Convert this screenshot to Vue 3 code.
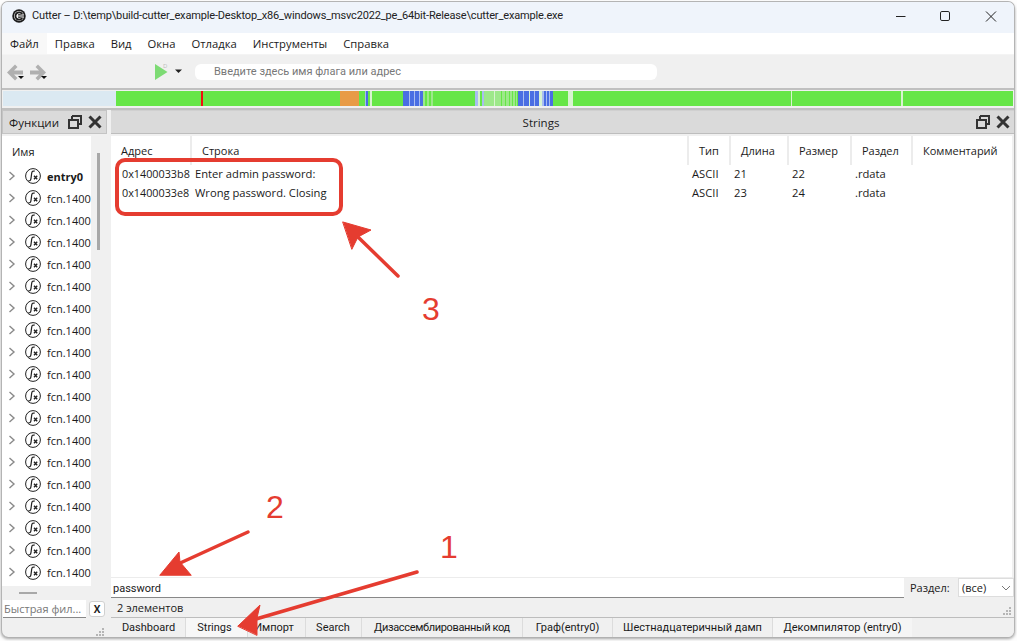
<script setup>
const functions = ['entry0', ...Array(18).fill('fcn.1400')]
const columns = [
  { label: 'Адрес', cls: 'c-addr' },
  { label: 'Строка', cls: 'c-str' },
  { label: 'Тип', cls: 'c-type' },
  { label: 'Длина', cls: 'c-len' },
  { label: 'Размер', cls: 'c-size' },
  { label: 'Раздел', cls: 'c-sec' },
  { label: 'Комментарий', cls: 'c-com' },
]
const rows = [
  ['0x1400033b8', 'Enter admin password:', 'ASCII', '21', '22', '.rdata'],
  ['0x1400033e8', 'Wrong password. Closing', 'ASCII', '23', '24', '.rdata'],
]
const tabs = [
  { label: 'Dashboard', w: 73, pad: 1 },
  { label: 'Strings', w: 62, pad: 4, active: true },
  { label: 'Импорт', w: 58, pad: 5 },
  { label: 'Search', w: 56, pad: 1 },
  { label: 'Дизассемблированный код', w: 161, pad: 0, tight: true },
  { label: 'Граф(entry0)', w: 90, pad: 0 },
  { label: 'Шестнадцатеричный дамп', w: 160, pad: 0 },
  { label: 'Декомпилятор (entry0)', w: 139, pad: 0 },
]
const G = '#66e647', B = '#4a6ee3', L = '#a9bdf0', W = '#d8f3d0', P = '#9de88a', O = '#e89b46', R = '#f01010'
const segments = [
  [G, 85], [R, 2], [G, 137], [O, 19], [G, 6], [L, 1], [B, 2], [G, 2], [W, 2], [G, 31],
  [B, 6], [L, 1], [B, 4], [L, 1], [B, 4], [L, 1], [B, 3],
  [P, 2], [G, 2], [P, 2], [G, 2], [P, 2], [G, 42],
  [L, 3], [W, 2], [G, 2], [L, 2],
  [P, 10], [W, 1], [P, 6], [G, 1], [P, 3], [G, 1], [P, 3], [G, 1], [P, 2], [G, 1], [P, 2], [G, 1], [P, 1], [G, 1],
  [B, 5], [L, 1], [B, 5], [W, 1], [B, 4], [L, 1], [B, 4], [W, 3], [L, 2], [B, 2], [L, 1], [B, 2], [L, 1], [B, 3],
  [G, 15], [W, 5], [G, 218], [W, 1], [G, 109], [W, 2], [G, 110],
]
</script>

<template>
  <div class="page">
    <div class="window">
      <header class="titlebar">
        <svg class="logo" width="16" height="16" viewBox="0 0 18 18">
          <circle cx="9" cy="9" r="7.6" fill="#1c1c1c" />
          <circle cx="9" cy="9" r="5.6" fill="#f4f4f4" />
          <path d="M12.5 6.4A4.2 4.2 0 1 0 12.5 11.6" fill="none" stroke="#1c1c1c" stroke-width="2" />
          <path d="M8 9h7M8 7.5l6-1M8 10.5l6 1" stroke="#1c1c1c" stroke-width="1" fill="none" />
        </svg>
        <span class="title">Cutter – D:\temp\build-cutter_example-Desktop_x86_windows_msvc2022_pe_64bit-Release\cutter_example.exe</span>
        <div class="winctl">
          <svg width="46" height="30" viewBox="0 0 46 30"><path d="M20 14.5h9.5" stroke="#222" /></svg>
          <svg width="46" height="30" viewBox="0 0 46 30"><rect x="18.5" y="9.5" width="9" height="9" rx="1.4" fill="none" stroke="#222" /></svg>
          <svg width="46" height="30" viewBox="0 0 46 30"><path d="M18 9.5l10 10M28 9.5l-10 10" stroke="#222" /></svg>
        </div>
      </header>

      <nav class="menubar">
        <span class="menu active">Файл</span>
        <span class="menu">Правка</span>
        <span class="menu">Вид</span>
        <span class="menu">Окна</span>
        <span class="menu">Отладка</span>
        <span class="menu">Инструменты</span>
        <span class="menu">Справка</span>
      </nav>

      <div class="toolbar">
        <svg class="nav-ico" width="24" height="24" viewBox="0 0 24 24">
          <path d="M0 12.5L8 4.5L10.5 7L7 10.5H16V14.5H7L10.5 18L8 20.5Z" fill="#b0b0b0" />
          <path d="M11 16h6l-3 3z" fill="#111" />
        </svg>
        <svg class="nav-ico" width="24" height="24" viewBox="0 0 24 24">
          <path d="M16 12.5L8 4.5L5.5 7L9 10.5H0V14.5H9L5.5 18L8 20.5Z" fill="#b0b0b0" />
          <path d="M11 16h6l-3 3z" fill="#111" />
        </svg>
        <div class="play">
          <svg width="34" height="20" viewBox="0 0 34 20">
            <path d="M0 2l12.5 8L0 18z" fill="#7ddb74" />
            <text x="8" y="6" class="play-d">D</text>
            <path d="M20 7.5h7l-3.5 3.5z" fill="#222" />
          </svg>
        </div>
        <div class="omnibar">Введите здесь имя флага или адрес</div>
      </div>

      <div class="overview">
        <div class="ov-blank"></div>
        <div class="ov-bar">
          <i v-for="(s, i) in segments" :key="i" :style="{ background: s[0], width: s[1] + 'px' }"></i>
        </div>
      </div>

      <div class="workspace">
        <aside class="left">
          <div class="dock-head left-head">
            <span>Функции</span>
            <svg class="dock-ico" width="16" height="16" viewBox="0 0 16 16">
              <path d="M5 2h9v8h-2.5M5 2v3" fill="none" stroke="#333" stroke-width="2" />
              <rect x="2" y="6" width="9" height="8" fill="none" stroke="#333" stroke-width="2" />
            </svg>
            <svg class="dock-ico" width="16" height="16" viewBox="0 0 16 16">
              <path d="M2.5 2.5l11 11M13.5 2.5l-11 11" stroke="#333" stroke-width="3" />
            </svg>
          </div>
          <div class="left-body">
            <div class="fn-list">
              <div class="fn-head">Имя</div>
              <div v-for="(f, i) in functions" :key="i" class="fn-row" :class="{ bold: i === 0 }">
                <svg class="chev" width="8" height="10" viewBox="0 0 8 10"><path d="M1.5 1l4.5 4-4.5 4" fill="none" stroke="#8a8a8a" stroke-width="1.4" /></svg>
                <svg class="fn-ico" width="16" height="16" viewBox="0 0 16 16">
                  <circle cx="8" cy="8" r="7.4" fill="#fff" stroke="#222" />
                  <path d="M3.4 12.6c1.8.5 2.300-.4 2.600-2.300l.7-5.200c.3-1.800 1.300-2.400 3-1.900" fill="none" stroke="#222" stroke-width="1.200" />
                  <path d="M9 7.800l3.200 3.400M12.200 7.800L9 11.200" stroke="#222" stroke-width="1.400" />
                </svg>
                <span class="fn-name">{{ f }}</span>
              </div>
            </div>
            <div class="v-scroll"><i></i></div>
          </div>
          <div class="h-scroll"><i></i></div>
          <div class="quick">
            <div class="quick-input">Быстрая фил...</div>
            <div class="quick-x">X</div>
          </div>
          <div class="grip-row">
            <svg width="10" height="9" viewBox="0 0 10 9" fill="#b5b5b5"><rect x="7" y="0" width="2" height="2"/><rect x="4" y="3" width="2" height="2"/><rect x="7" y="3" width="2" height="2"/><rect x="1" y="6" width="2" height="2"/><rect x="4" y="6" width="2" height="2"/><rect x="7" y="6" width="2" height="2"/></svg>
          </div>
        </aside>

        <main class="right">
          <div class="dock-head main-head">
            <span class="main-title">Strings</span>
            <svg class="dock-ico" width="16" height="16" viewBox="0 0 16 16">
              <path d="M5 2h9v8h-2.5M5 2v3" fill="none" stroke="#333" stroke-width="2" />
              <rect x="2" y="6" width="9" height="8" fill="none" stroke="#333" stroke-width="2" />
            </svg>
            <svg class="dock-ico" width="16" height="16" viewBox="0 0 16 16">
              <path d="M2.5 2.5l11 11M13.5 2.5l-11 11" stroke="#333" stroke-width="3" />
            </svg>
          </div>
          <div class="table">
            <div class="thead grid">
              <div v-for="c in columns" :key="c.label" class="th" :class="c.cls">{{ c.label }}</div>
            </div>
            <div v-for="r in rows" :key="r[0]" class="tr grid">
              <div v-for="(v, j) in r" :key="j" class="td" :class="{ first: j === 0 }">{{ v }}</div>
            </div>
          </div>
          <div class="filter">
            <div class="filter-input">password</div>
            <label class="filter-label">Раздел:</label>
            <div class="combo">
              <span>(все)</span>
              <svg width="10" height="6" viewBox="0 0 10 6"><path d="M1 1l4 4 4-4" fill="none" stroke="#777" /></svg>
            </div>
          </div>
          <div class="status">
            <span>2 элементов</span>
            <svg width="10" height="9" viewBox="0 0 10 9" fill="#b5b5b5"><rect x="7" y="0" width="2" height="2"/><rect x="4" y="3" width="2" height="2"/><rect x="7" y="3" width="2" height="2"/><rect x="1" y="6" width="2" height="2"/><rect x="4" y="6" width="2" height="2"/><rect x="7" y="6" width="2" height="2"/></svg>
          </div>
          <div class="tabs">
            <div
              v-for="t in tabs"
              :key="t.label"
              class="tab"
              :class="{ active: t.active, tight: t.tight }"
              :style="{ width: t.w + 'px', paddingRight: t.pad + 'px' }"
            >{{ t.label }}</div>
          </div>
        </main>
      </div>
    </div>

    <div class="redbox"></div>
    <svg class="notes" width="1017" height="641" viewBox="0 0 1017 641">
      <g fill="#e53c30" stroke="#e53c30" stroke-linecap="round">
        <path d="M398 276L358 237" stroke-width="3.5" fill="none" />
        <path d="M343 222l28 8-13 7-6 12z" stroke-width="1" />
        <path d="M248 532L178 564" stroke-width="3.5" fill="none" />
        <path d="M160 575l19-23 1 10 11 13z" stroke-width="1" />
        <path d="M417 572L256 619" stroke-width="3.5" fill="none" />
        <path d="M238 626l22-21-3 13 0 17z" stroke-width="1" />
      </g>
    </svg>
    <span class="num n1">1</span>
    <span class="num n2">2</span>
    <span class="num n3">3</span>
  </div>
</template>

<style>
html, body { margin: 0; background: #fff; overflow: hidden; }
</style>

<style scoped>
.page {
  position: relative;
  width: 1017px;
  height: 641px;
  overflow: hidden;
  background: #fdfdfd;
  font-family: "Open Sans", "Noto Sans", sans-serif;
  font-size: 11px;
  color: #1a1a1a;
}
.window {
  width: 1014px;
  height: 636px;
  margin-left: 1px;
  margin-top: 1px;
  border-radius: 7px;
  border: 1px solid #b4b4b4;
  border-width: 1px 1px 0 1px;
  box-shadow: 0 2px 3px rgba(0, 0, 0, .35);
  background: #f0f0f0;
  display: flex;
  flex-direction: column;
  overflow: hidden;
  box-sizing: border-box;
}
.titlebar {
  height: 31px;
  flex: none;
  background: #eff4fb;
  display: flex;
  align-items: flex-start;
  padding-left: 9px;
  box-sizing: border-box;
}
.logo { margin: 6px 5px 0 0; }
.title {
  font-family: Roboto, sans-serif;
  font-size: 11px;
  letter-spacing: -.16px;
  line-height: 28px;
  flex: 1;
  white-space: nowrap;
  color: #222;
}
.winctl { display: flex; width: 138px; }
.menubar {
  height: 21px;
  flex: none;
  background: #fff;
  display: flex;
  align-items: center;
  border-bottom: 1px solid #f4f4f4;
  font-size: 11.25px;
}
.menu { padding: 0 8px; line-height: 21px; }
.menu.active { background: #f8f8f8; }
.toolbar {
  height: 33px;
  flex: none;
  display: flex;
  align-items: center;
  background: #f0f0f0;
}
.nav-ico { margin-left: 5px; margin-right: -6px; }
.play { margin-left: 107px; width: 40px; display: flex; flex: none; }
.play-d { font-size: 6px; fill: #bbb; font-family: "Open Sans", sans-serif; }
.omnibar {
  width: 443px;
  height: 16px;
  background: #fff;
  border-radius: 6px;
  padding-left: 19px;
  line-height: 16px;
  color: #777;
  font-family: Roboto, sans-serif;
}
.overview {
  height: 22px;
  flex: none;
  border-top: 2px solid #c0c0c0;
  border-bottom: 2px solid #c0c0c0;
  padding: 1px 0 2px 1px;
  display: flex;
  background: #f0f0f0;
  box-sizing: border-box;
}
.ov-blank { width: 113px; background: #dbe9f2; flex: none; }
.ov-bar { width: 897px; display: flex; flex: none; }
.ov-bar i { display: block; flex: none; }
.workspace { flex: 1; display: flex; min-height: 0; }
.left {
  width: 109px;
  flex: none;
  display: flex;
  flex-direction: column;
  box-sizing: border-box;
}
.dock-head {
  height: 24px;
  flex: none;
  background: #dadada;
  border-bottom: 1px solid #bdbdbd;
  display: flex;
  align-items: center;
  box-sizing: border-box;
}
.left-head { width: 105px; padding: 0 3px 0 6px; border: 1px solid #c4c4c4; font-size: 11.5px; }
.left-head span { flex: 1; }
.dock-ico { display: block; margin-left: 4px; }
.left-body { flex: 1; display: flex; min-height: 0; padding-top: 2px; }
.fn-list { width: 89px; background: #fff; overflow: hidden; flex: none; }
.fn-head { height: 29px; line-height: 31px; padding-left: 10px; }
.fn-row { height: 22px; display: flex; align-items: center; white-space: nowrap; }
.fn-row .chev { margin-left: 6px; }
.fn-ico { margin-left: 9px; flex: none; }
.fn-name { margin-left: 6px; }
.fn-row.bold .fn-name { font-weight: 700; }
.v-scroll { padding: 17px 0 0 6px; }
.v-scroll i { display: block; width: 3px; height: 97px; background: #a8a8a8; }
.h-scroll { height: 13px; flex: none; padding: 6px 0 0 17px; box-sizing: border-box; }
.h-scroll i { display: block; width: 18px; height: 2px; background: #a8a8a8; }
.quick { height: 19px; flex: none; display: flex; align-items: center; padding-left: 1px; }
.quick-input {
  width: 83px;
  height: 18px;
  line-height: 18px;
  background: #fff;
  border-bottom: 1px solid #888;
  color: #777;
  box-sizing: border-box;
  white-space: nowrap;
  overflow: hidden;
  padding-left: 1px;
}
.quick-x {
  width: 16px;
  height: 16px;
  margin-left: 3px;
  background: #fff;
  border: 1px solid #d0d0d0;
  border-radius: 3px;
  box-sizing: border-box;
  text-align: center;
  line-height: 14px;
  font-weight: 700;
  font-size: 10px;
}
.grip-row { height: 19px; flex: none; display: flex; justify-content: flex-end; align-items: flex-end; padding-right: 6px; }
.right { flex: 1; min-width: 0; display: flex; flex-direction: column; }
.main-head { padding-right: 3px; border-top: 1px solid #d0d0d0; }
.main-title { flex: 1; text-align: center; font-size: 11.5px; }
.table { flex: 1; background: #fff; min-height: 0; margin-top: 2px; margin-right: 2px; }
.grid { display: grid; grid-template-columns: 81px 497px 42px 58px 63px 61px 1fr; }
.thead { height: 28px; }
.th { line-height: 30px; border-right: 2px solid #ececec; height: 29px; padding-left: 10px; box-sizing: border-box; }
.th:last-child { border-right: 0; }
.tr { height: 19px; line-height: 19px; }
.td { padding-left: 3px; white-space: nowrap; font-size: 11.2px; }
.td.first { padding-left: 11px; font-size: 10.8px; }
.filter {
  height: 20px;
  flex: none;
  display: flex;
  align-items: center;
  background: #f0f0f0;
  border-top: 1px solid #ececec;
  box-sizing: border-box;
}
.filter-input {
  width: 793px;
  height: 20px;
  line-height: 21px;
  background: #fff;
  border-bottom: 1px solid #888;
  box-sizing: border-box;
  padding-left: 2px;
  font-family: Roboto, sans-serif;
}
.filter-label { margin-left: 6px; width: 48px; }
.combo {
  width: 56px;
  height: 19px;
  background: #fff;
  border: 1px solid #ddd;
  box-sizing: border-box;
  display: flex;
  align-items: center;
  justify-content: space-between;
  padding: 0 2px 0 3px;
}
.status {
  height: 20px;
  flex: none;
  display: flex;
  align-items: center;
  justify-content: space-between;
  padding: 0 2px 0 6px;
}
.status svg { align-self: flex-end; margin-bottom: 1px; }
.tabs {
  height: 20px;
  flex: none;
  display: flex;
  border-top: 1px solid #bdbdbd;
  padding-left: 2px;
  box-sizing: border-box;
  background: #f0f0f0;
  font-family: Roboto, sans-serif;
}
.tab {
  flex: none;
  box-sizing: border-box;
  text-align: center;
  line-height: 20px;
  border-right: 1px solid #dcdcdc;
  white-space: nowrap;
}
.tab.tight { letter-spacing: -.35px; }
.tab.active { background: #f7f7f7; }
.tab:last-child { background: #f5f5f5; border: 0; }
.redbox {
  position: absolute;
  left: 115px;
  top: 158px;
  width: 228px;
  height: 58px;
  border: 4px solid #e53c30;
  border-radius: 10px;
  box-sizing: border-box;
}
.notes { position: absolute; left: 0; top: 0; pointer-events: none; }
.num {
  position: absolute;
  font-family: "Liberation Sans", sans-serif;
  font-size: 32px;
  line-height: 32px;
  color: #e53c30;
}
.n1 { left: 440px; top: 531px; }
.n2 { left: 266px; top: 491px; }
.n3 { left: 422px; top: 293px; }
</style>
